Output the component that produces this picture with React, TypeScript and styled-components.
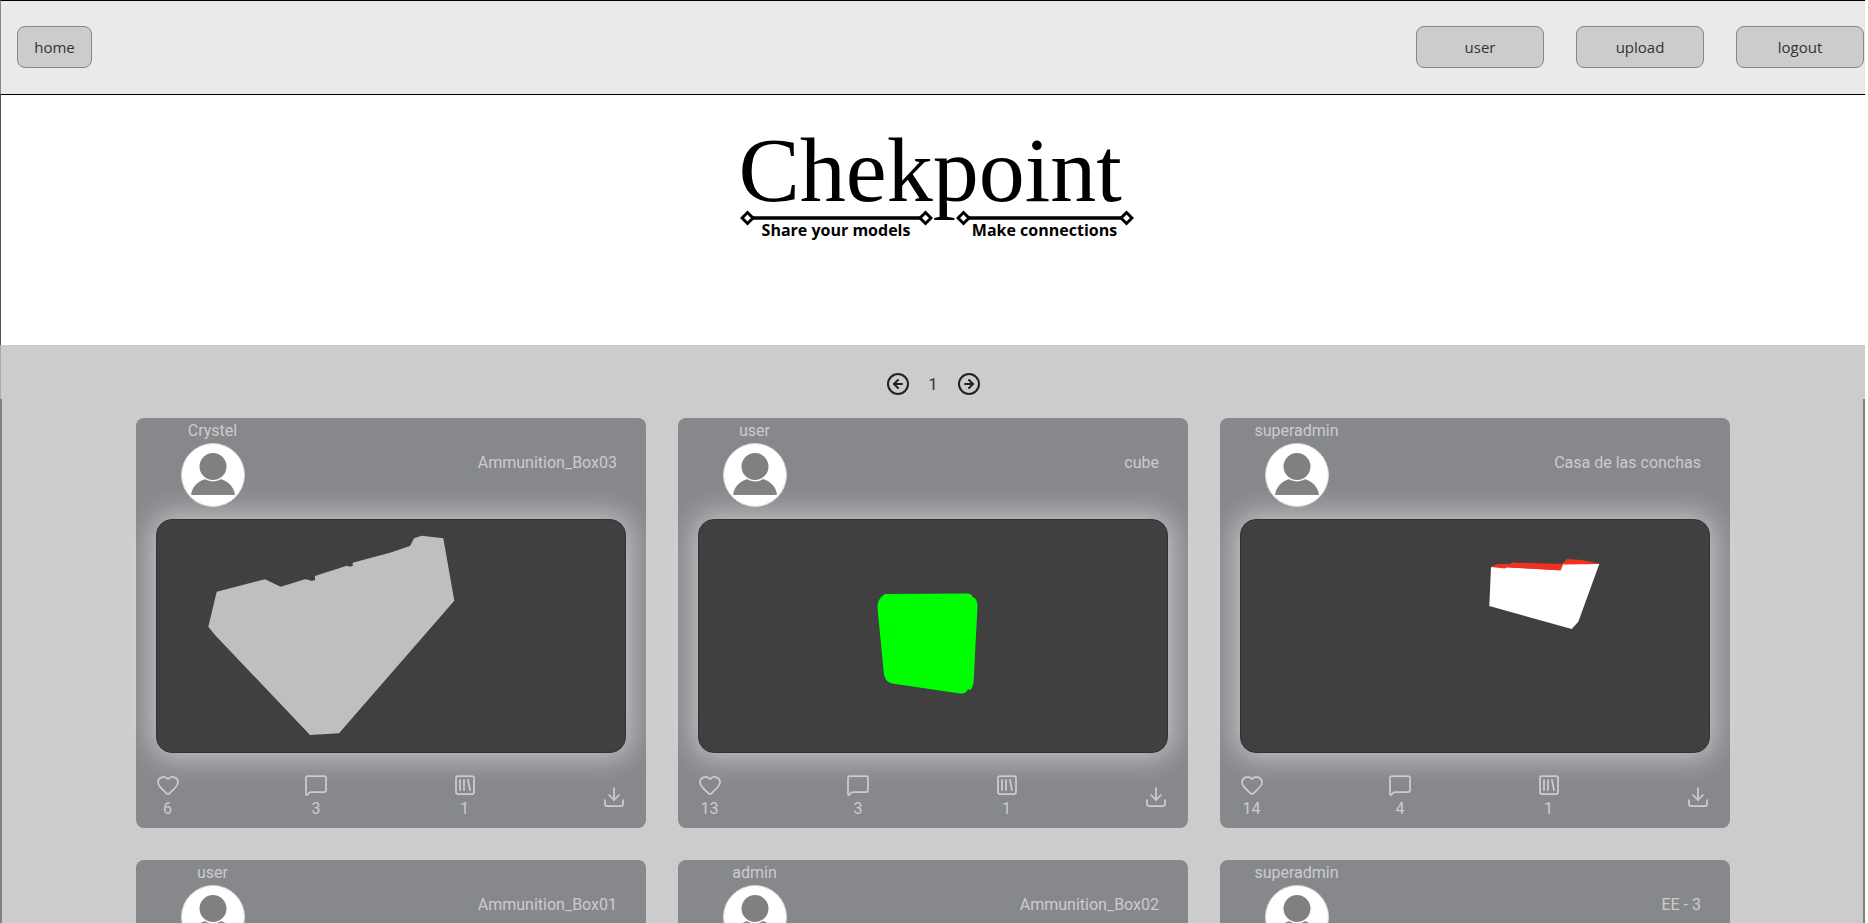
import styled, { createGlobalStyle } from "styled-components";
import { ReactNode } from "react";
import {
   CircleArrowLeft,
   CircleArrowRight,
   Download,
   Heart,
   MessageSquare,
   SquareLibrary,
} from "lucide-react";

const GlobalStyle = createGlobalStyle`
   html, body {
      margin: 0;
      height: 100%;
      overflow: hidden;
      background: #fff;
   }
   * {
      box-sizing: border-box;
   }
`;

const AmmoShape = () => (
   <polygon
      fill="#bfbfbf"
      points="60.7,72.7 109,60.3 124.7,67.7 149,60.3 153.3,61 155.7,62 159,61 159,57 190.7,46.7 194,47.7 196.7,47 196.7,43.7 234,33.7 254,27 258,19.3 265.7,16.7 287.3,19.3 298.3,81.7 183,214.3 154,216 59,116 52.3,107.7"
   />
);

const CubeShape = () => (
   <path
      fill="#00ff00"
      d="M187 75 L270 74.5 Q274 75 274.5 78 Q279.5 79 279.5 88 L275.5 164 Q274 170 272 171 L270 170 Q268 175 262 174.5 L194 164.5 Q188 163 186 156 L179.5 89 Q179 80 187 75 Z"
   />
);

const CasaShape = () => (
   <>
      <polygon
         fill="#ffffff"
         points="251,48 249.3,87 331.7,110 338.3,102.7 359.3,45 321.7,45 320.7,51 266.7,48.3"
      />
      <polygon
         fill="#f2301f"
         points="251,48 257,45 270,45 272,43.5 321.7,45 327,40 342,41 361,45 323,45.5 320.7,51.5 266.7,48.3 265,49.5"
      />
   </>
);

interface Model {
   user: string;
   title: string;
   likes: number;
   comments: number;
   collections: number;
   shape?: ReactNode;
}

const models: Model[] = [
   { user: "Crystel", title: "Ammunition_Box03", likes: 6, comments: 3, collections: 1, shape: <AmmoShape /> },
   { user: "user", title: "cube", likes: 13, comments: 3, collections: 1, shape: <CubeShape /> },
   { user: "superadmin", title: "Casa de las conchas", likes: 14, comments: 4, collections: 1, shape: <CasaShape /> },
   { user: "user", title: "Ammunition_Box01", likes: 2, comments: 1, collections: 1 },
   { user: "admin", title: "Ammunition_Box02", likes: 3, comments: 1, collections: 1 },
   { user: "superadmin", title: "EE - 3", likes: 5, comments: 2, collections: 1 },
];

function Avatar() {
   return (
      <AvatarCircle viewBox="0 0 64 64">
         <circle cx="32" cy="32" r="31.5" fill="#fff" stroke="#d4d4d4" />
         <path d="M10 52 C11 42 20 35 32 35 C44 35 53 42 54 52 Z" fill="#808080" />
         <circle cx="32" cy="23.5" r="14.2" fill="#808080" stroke="#fff" strokeWidth="1.4" />
      </AvatarCircle>
   );
}

function ModelCard({ model }: { model: Model }) {
   return (
      <Card>
         <CardHeader>
            <Author>
               <AuthorName>{model.user}</AuthorName>
               <Avatar />
            </Author>
            <ModelTitle>{model.title}</ModelTitle>
         </CardHeader>
         <Viewer>
            <svg viewBox="0 0 470 234" width="470" height="234">
               {model.shape}
            </svg>
         </Viewer>
         <CardFooter>
            <Stat>
               <Heart size={24} strokeWidth={1.75} />
               <span>{model.likes}</span>
            </Stat>
            <Stat>
               <MessageSquare size={24} strokeWidth={1.75} />
               <span>{model.comments}</span>
            </Stat>
            <Stat>
               <SquareLibrary size={24} strokeWidth={1.75} />
               <span>{model.collections}</span>
            </Stat>
            <DownloadButton>
               <Download size={24} strokeWidth={1.75} />
            </DownloadButton>
         </CardFooter>
      </Card>
   );
}

export default function App() {
   return (
      <Page>
         <GlobalStyle />
         <Navbar>
            <NavButton>home</NavButton>
            <NavGroup>
               <NavButton $wide>user</NavButton>
               <NavButton $wide>upload</NavButton>
               <NavButton $wide>logout</NavButton>
            </NavGroup>
         </Navbar>
         <Hero>
            <Logo>
               <LogoTitle>Chekpoint</LogoTitle>
               <LogoRow>
                  <Tagline>
                     <Rule viewBox="0 0 193 16" width="193" height="16">
                        <path d="M8 8H185" stroke="#000" strokeWidth="3.4" />
                        <path d="M7.5 2.5L13 8L7.5 13.5L2 8Z" fill="#fff" stroke="#000" strokeWidth="3" />
                        <path d="M185.5 2.5L191 8L185.5 13.5L180 8Z" fill="#fff" stroke="#000" strokeWidth="3" />
                     </Rule>
                     <TaglineText>Share your models</TaglineText>
                  </Tagline>
                  <Tagline>
                     <Rule viewBox="0 0 178 16" width="178" height="16">
                        <path d="M8 8H170" stroke="#000" strokeWidth="3.4" />
                        <path d="M7.5 2.5L13 8L7.5 13.5L2 8Z" fill="#fff" stroke="#000" strokeWidth="3" />
                        <path d="M170.5 2.5L176 8L170.5 13.5L165 8Z" fill="#fff" stroke="#000" strokeWidth="3" />
                     </Rule>
                     <TaglineText>Make connections</TaglineText>
                  </Tagline>
               </LogoRow>
            </Logo>
         </Hero>
         <Gallery>
            <Pagination>
               <CircleArrowLeft size={24} strokeWidth={2} />
               <PageNumber>1</PageNumber>
               <CircleArrowRight size={24} strokeWidth={2} />
            </Pagination>
            <CardGrid>
               {models.map((model) => (
                  <ModelCard key={model.title} model={model} />
               ))}
            </CardGrid>
         </Gallery>
      </Page>
   );
}

const Page = styled.div`
   width: 1865px;
   font-family: Roboto, "Liberation Sans", sans-serif;
`;

const Navbar = styled.header`
   height: 95px;
   background: #eaeaea;
   border-top: 1px solid #000;
   border-bottom: 1px solid #000;
   border-left: 1px solid #888;
   padding: 0 1px 1px 16px;
   display: flex;
   align-items: center;
   justify-content: space-between;
`;

const NavGroup = styled.nav`
   display: flex;
   gap: 32px;
`;

const NavButton = styled.button<{ $wide?: boolean }>`
   width: ${({ $wide }) => ($wide ? "128px" : "75px")};
   height: 42px;
   background: #ccc;
   border: 1px solid #888;
   border-radius: 8px;
   color: #333;
   font-family: "Open Sans", "Noto Sans", sans-serif;
   font-size: 15px;
   padding: 0;
`;

const Hero = styled.section`
   height: 250px;
   padding-top: 39px;
   border-left: 1px solid #555;
   display: flex;
   justify-content: center;
`;

const Logo = styled.div`
   width: 394px;
   margin-left: 7px;
`;

const LogoTitle = styled.h1`
   margin: 0 0 0 -1px;
   height: 72px;
   font-family: "Liberation Serif", "Times New Roman", serif;
   font-weight: 400;
   font-size: 92px;
   line-height: 72px;
   color: #000;
   white-space: nowrap;
   position: relative;
   z-index: 1;
`;

const LogoRow = styled.div`
   display: flex;
   gap: 23px;
   padding-top: 4px;
`;

const Tagline = styled.div`
   display: flex;
   flex-direction: column;
   align-items: center;
`;

const Rule = styled.svg`
   display: block;
`;

const TaglineText = styled.span`
   font-family: "Open Sans", "Noto Sans", sans-serif;
   font-weight: 700;
   font-size: 16px;
   line-height: 18px;
   margin-top: -5px;
   color: #000;
`;

const Gallery = styled.main`
   background: #ccc;
   height: 1200px;
`;

const Pagination = styled.div`
   height: 54px;
   padding: 26px 0 2px;
   border-left: 1px solid #aaa;
   display: flex;
   align-items: center;
   justify-content: center;
   gap: 19px;
   color: #222;
`;

const PageNumber = styled.span`
   font-size: 16px;
   color: #333;
`;

const CardGrid = styled.div`
   display: grid;
   grid-template-columns: repeat(3, 510px);
   justify-content: center;
   column-gap: 32px;
   row-gap: 31.6px;
   padding-top: 19px;
   border-left: 2px solid #808080;
   border-right: 2px solid #808080;
`;

const Card = styled.article`
   height: 410px;
   background: #87888c;
   border-radius: 8px;
   color: #ccc;
   padding: 0 20px;
   display: flex;
   flex-direction: column;
`;

const CardHeader = styled.div`
   height: 101px;
   display: flex;
   justify-content: space-between;
`;

const Author = styled.div`
   width: 64px;
   margin-left: 25px;
   display: flex;
   flex-direction: column;
   align-items: center;
`;

const AuthorName = styled.span`
   font-size: 16px;
   line-height: 24px;
   margin-top: 1px;
   white-space: nowrap;
`;

const AvatarCircle = styled.svg`
   width: 64px;
   height: 64px;
   flex: none;
`;

const ModelTitle = styled.span`
   font-size: 16px;
   line-height: 24px;
   margin-top: 33px;
   margin-right: 8.5px;
   white-space: nowrap;
`;

const Viewer = styled.div`
   width: 470px;
   height: 234px;
   flex: none;
   background: #404040;
   border-radius: 16px;
   box-shadow: 0 0 30px 4px rgba(255, 255, 255, 0.55);
   border: 1px solid #333;
   overflow: hidden;

   svg {
      display: block;
      margin: -1px;
   }
`;

const CardFooter = styled.div`
   display: grid;
   grid-template-columns: 24px 24px 24px 1fr;
   column-gap: 124.5px;
   align-items: center;
   padding-top: 20px;
`;

const Stat = styled.div`
   display: flex;
   flex-direction: column;
   align-items: center;
   width: 24px;
   font-size: 16px;
   line-height: 24px;

   svg {
      flex: none;
   }
`;

const DownloadButton = styled.div`
   justify-self: end;
   height: 24px;
`;
